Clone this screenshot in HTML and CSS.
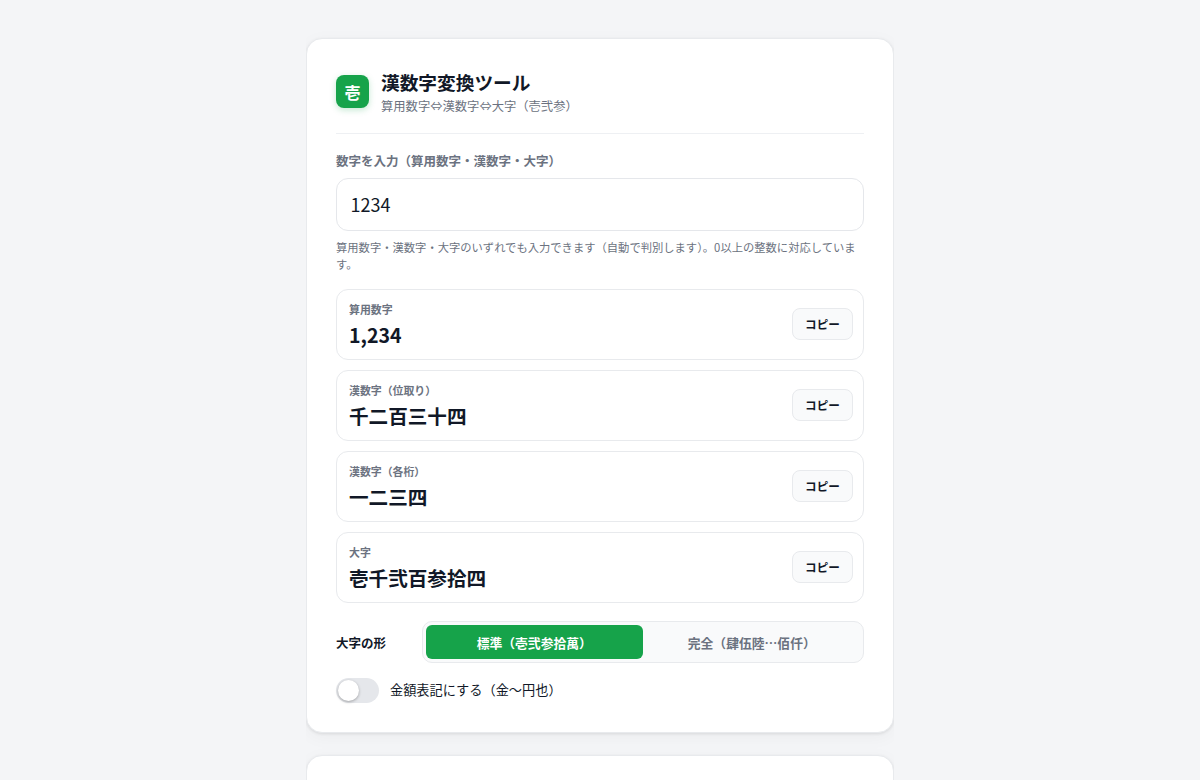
FILE: index.html
```html
<!DOCTYPE html>
<html lang="ja">
<head>
<meta charset="utf-8">
<title>漢数字変換ツール</title>
<link rel="stylesheet" href="styles.css">
</head>
<body>
<main class="page">
  <section class="card">
    <header class="head">
      <div class="logo">壱</div>
      <div class="head-text">
        <h1 class="title">漢数字変換ツール</h1>
        <p class="sub">算用数字⇔漢数字⇔大字（壱弐参）</p>
      </div>
    </header>
    <label class="label" for="num">数字を入力（算用数字・漢数字・大字）</label>
    <input class="input" id="num" value="1234">
    <p class="hint">算用数字・漢数字・大字のいずれでも入力できます（自動で判別します）。0以上の整数に対応しています。</p>
    <div class="results">
      <div class="result">
        <div class="result-text"><div class="result-label">算用数字</div><div class="result-value">1,234</div></div>
        <button class="copy">コピー</button>
      </div>
      <div class="result">
        <div class="result-text"><div class="result-label">漢数字（位取り）</div><div class="result-value">千二百三十四</div></div>
        <button class="copy">コピー</button>
      </div>
      <div class="result">
        <div class="result-text"><div class="result-label">漢数字（各桁）</div><div class="result-value">一二三四</div></div>
        <button class="copy">コピー</button>
      </div>
      <div class="result">
        <div class="result-text"><div class="result-label">大字</div><div class="result-value">壱千弐百参拾四</div></div>
        <button class="copy">コピー</button>
      </div>
    </div>
    <div class="form-row">
      <span class="form-label">大字の形</span>
      <div class="segment">
        <button class="seg seg-on">標準（壱弐参拾萬）</button>
        <button class="seg">完全（肆伍陸…佰仟）</button>
      </div>
    </div>
    <div class="toggle-row">
      <span class="toggle"><span class="knob"></span></span>
      <span class="toggle-label">金額表記にする（金〜円也）</span>
    </div>
  </section>
  <section class="card card-next"></section>
</main>
</body>
</html>
```
FILE: styles.css
```css
* { box-sizing: border-box; }
html, body { margin: 0; height: 780px; overflow: hidden; }
body {
  background: #f4f5f7;
  color: #111827;
  font-family: "Noto Sans CJK JP", "Noto Sans", sans-serif;
}
.page {
  width: 588px;
  height: 780px;
  overflow: hidden;
  margin: 0 auto;
  padding-top: 38px;
  display: flex;
  flex-direction: column;
  gap: 22px;
}
.card {
  flex: none;
  background: #fff;
  border: 1px solid #e8eaed;
  border-radius: 16px;
  padding: 29px;
  box-shadow: 0 1px 3px rgba(0,0,0,.09), 0 4px 18px rgba(0,0,0,.04);
}
.card-next { height: 200px; }
.head {
  display: flex;
  align-items: center;
  gap: 12px;
  height: 66px;
  padding-bottom: 18px;
  margin-bottom: 18px;
  border-bottom: 1px solid #eef0f3;
}
.logo {
  width: 33px;
  height: 33px;
  flex: none;
  border-radius: 8px;
  background: #16a34a;
  color: #fff;
  font-size: 16px;
  font-weight: 700;
  display: flex;
  align-items: center;
  justify-content: center;
  box-shadow: 0 2px 6px rgba(22,163,74,.25);
}
.title { margin: 0; font-size: 18.7px; line-height: 26px; font-weight: 700; color: #111827; }
.sub { margin: 2px 0 0; font-size: 12.3px; line-height: 18px; color: #6b7280; }
.label { display: block; font-size: 12.5px; line-height: 18px; font-weight: 700; color: #6b7280; margin-bottom: 8px; }
.input {
  display: block;
  width: 100%;
  height: 53px;
  padding: 0 13.5px 1px;
  border: 1px solid #e5e7eb;
  border-radius: 12px;
  background: #fff;
  font: 400 18px "Noto Sans CJK JP", sans-serif;
  color: #111827;
  outline: none;
}
.hint { margin: 8px 0 0; font-size: 11.3px; line-height: 17px; color: #6b7280; }
.results { display: flex; flex-direction: column; gap: 10px; margin-top: 16px; }
.result {
  height: 71px;
  display: flex;
  align-items: center;
  justify-content: space-between;
  padding: 0 10px 0 12px;
  border: 1px solid #e8eaed;
  border-radius: 12px;
}
.result-text { padding-top: 2px; }
.result-label { font-size: 10.9px; line-height: 15px; font-weight: 700; color: #6b7280; }
.result-value { font-size: 19.6px; line-height: 28px; font-weight: 700; color: #111827; margin-top: 4px; }
.copy {
  width: 61px;
  height: 32px;
  padding: 0;
  margin-bottom: 2px;
  border: 1px solid #e8eaed;
  border-radius: 8px;
  background: #f9fafb;
  color: #111827;
  font: 700 11.6px "Noto Sans CJK JP", sans-serif;
}
.form-row { display: flex; align-items: center; margin-top: 18px; }
.form-label { width: 86px; flex: none; font-size: 12.5px; font-weight: 700; color: #111827; }
.segment {
  flex: 1;
  height: 42px;
  display: flex;
  gap: 1px;
  padding: 3px;
  background: #f9fafb;
  border: 1px solid #e8eaed;
  border-radius: 10px;
}
.seg {
  flex: 1;
  border: 0;
  border-radius: 6px;
  background: transparent;
  color: #6b7280;
  font: 700 12.8px "Noto Sans CJK JP", sans-serif;
}
.seg-on { background: #16a34a; color: #fff; }
.toggle-row { display: flex; align-items: center; gap: 11px; margin-top: 15px; }
.toggle {
  width: 43px;
  height: 25px;
  border-radius: 13px;
  background: #e5e7eb;
  padding: 2px;
  display: block;
}
.knob {
  display: block;
  width: 21px;
  height: 21px;
  border-radius: 50%;
  background: #fff;
  box-shadow: 0 1px 3px rgba(0,0,0,.3);
}
.toggle-label { font-size: 13.2px; color: #111827; padding-bottom: 2px; }
```
